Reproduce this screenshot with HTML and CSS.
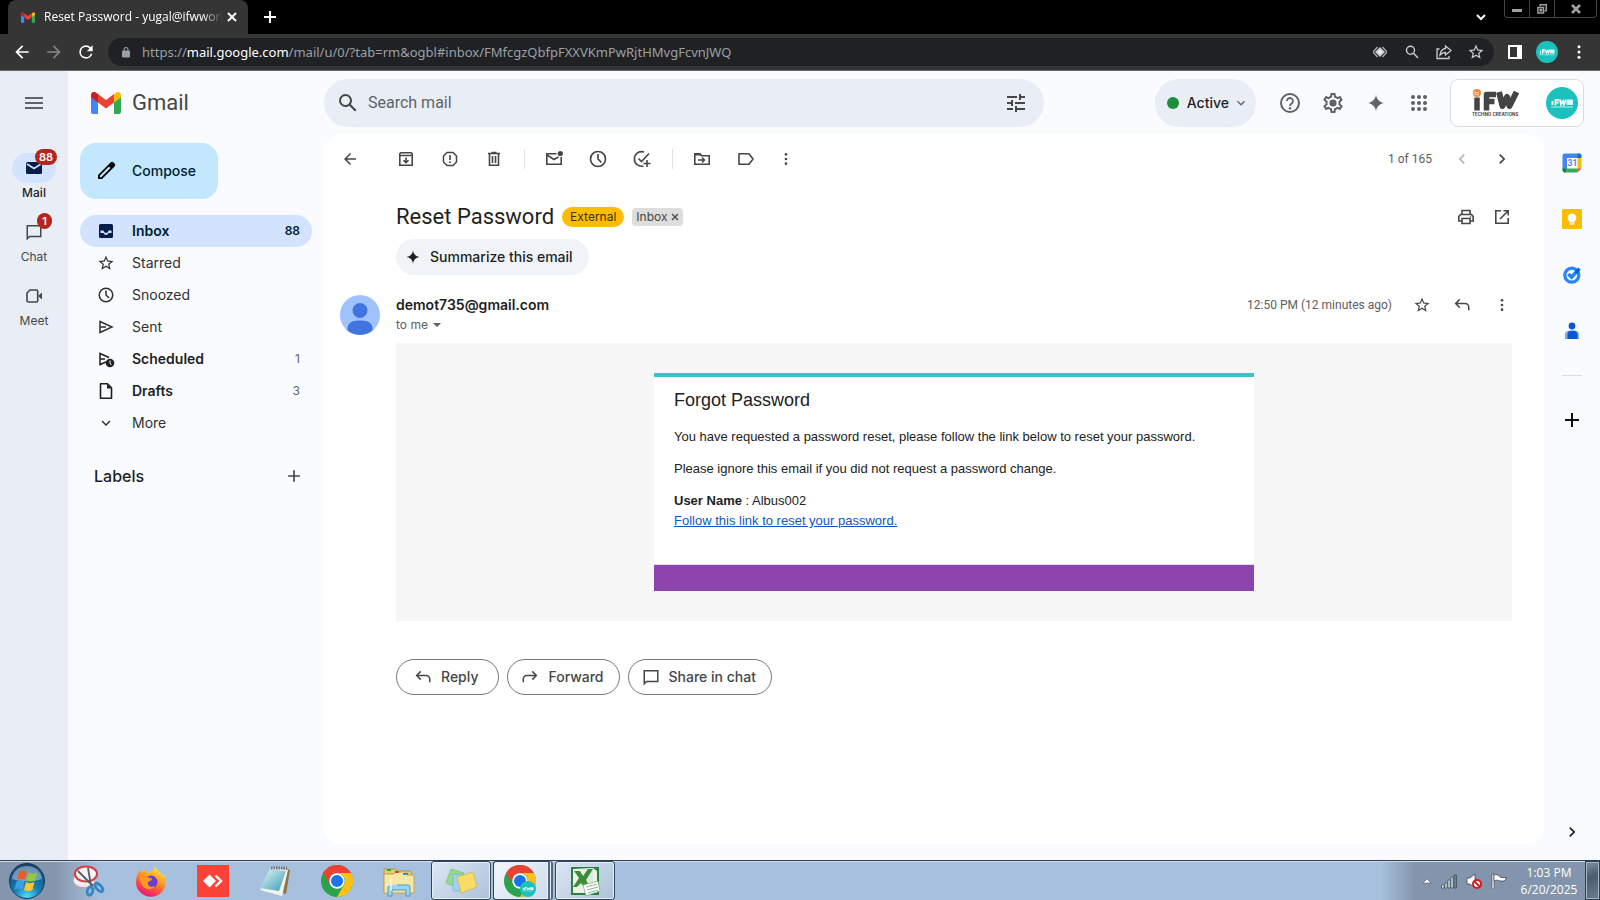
FILE: index.html
```html
<!DOCTYPE html>
<html lang="en">
<head>
<meta charset="utf-8">
<title>Reset Password - Gmail</title>
<link rel="stylesheet" href="styles.css">
</head>
<body>
<svg class="sprite" aria-hidden="true">
  <symbol id="gmail" viewBox="0 0 30 22"><path fill="#4285f4" d="M0 5v15a2 2 0 0 0 2 2h5V10z"/><path fill="#34a853" d="M23 22h5a2 2 0 0 0 2-2V5l-7 5z"/><path fill="#fbbc04" d="M23 2.600V10.500L30 5.200V3c0-2.600-3-4-5-2.300z"/><path fill="#ea4335" d="M7 10.500V2l8 6 8-6v8.500l-8 6z"/><path fill="#c5221f" d="M0 3v2.200l7 5.300V2L5.200.7C3-1 0 .4 0 3z"/></symbol>
  <symbol id="back" viewBox="0 0 24 24"><path d="M20 11H7.830l5.590-5.590L12 4l-8 8 8 8 1.410-1.410L7.830 13H20v-2z"/></symbol>
  <symbol id="fwd" viewBox="0 0 24 24"><path d="M4 11h12.170l-5.590-5.590L12 4l8 8-8 8-1.410-1.410L16.170 13H4v-2z"/></symbol>
  <symbol id="reload" viewBox="0 0 24 24"><path d="M17.650 6.350A7.960 7.960 0 0 0 12 4a8 8 0 1 0 7.730 10h-2.080A6 6 0 1 1 12 6c1.660 0 3.140.69 4.220 1.780L13 11h7V4l-2.350 2.350z"/></symbol>
  <symbol id="lock" viewBox="0 0 24 24"><path d="M18 8h-1V6A5 5 0 0 0 7 6v2H6a2 2 0 0 0-2 2v10a2 2 0 0 0 2 2h12a2 2 0 0 0 2-2V10a2 2 0 0 0-2-2zM9 6a3 3 0 0 1 6 0v2H9V6z"/></symbol>
  <symbol id="star" viewBox="0 0 24 24"><path d="M22 9.240l-7.190-.62L12 2 9.190 8.630 2 9.240l5.460 4.730L5.820 21 12 17.270 18.180 21l-1.630-7.030L22 9.240zM12 15.400l-3.760 2.270 1-4.280-3.320-2.880 4.380-.38L12 6.100l1.710 4.040 4.380.38-3.320 2.880 1 4.280L12 15.400z"/></symbol>
  <symbol id="search" viewBox="0 0 24 24"><path d="M20.490 19l-5.730-5.730C15.530 12.200 16 10.910 16 9.500A6.500 6.500 0 1 0 9.500 16c1.410 0 2.700-.47 3.770-1.240L19 20.490 20.490 19zM5 9.500a4.500 4.500 0 1 1 9 0 4.500 4.500 0 0 1-9 0z"/></symbol>
  <symbol id="down" viewBox="0 0 24 24"><path d="M7.400 8.600L12 13.200l4.600-4.600L18 10l-6 6-6-6z"/></symbol>
  <symbol id="left" viewBox="0 0 24 24"><path d="M15.400 7.400L14 6l-6 6 6 6 1.400-1.400L10.800 12z"/></symbol>
  <symbol id="right" viewBox="0 0 24 24"><path d="M8.600 7.400L10 6l6 6-6 6-1.400-1.400L13.200 12z"/></symbol>
  <symbol id="dots" viewBox="0 0 24 24"><circle cx="12" cy="5" r="2"/><circle cx="12" cy="12" r="2"/><circle cx="12" cy="19" r="2"/></symbol>
  <symbol id="clock" viewBox="0 0 24 24"><path fill="none" stroke="currentColor" stroke-width="2" d="M21 12a9 9 0 1 1-18 0 9 9 0 0 1 18 0zM12 6v6l4 4"/></symbol>
  <symbol id="spark" viewBox="0 0 24 24"><path d="M12 1c.9 6.200 4.800 10.100 11 11-6.200.9-10.100 4.800-11 11-.9-6.200-4.800-10.100-11-11 6.200-.9 10.100-4.800 11-11z"/></symbol>
  <symbol id="reply" viewBox="0 0 24 24"><path fill="none" stroke="currentColor" stroke-width="2" d="M9 4.500L3.500 10 9 15.500M4 10h12a5 5 0 0 1 5 5v4"/></symbol>
  <symbol id="chat" viewBox="0 0 24 24"><path fill="none" stroke="currentColor" stroke-width="2" d="M3 21V3.500h18V18H6z"/></symbol>
  <symbol id="plus" viewBox="0 0 24 24"><path d="M11 5h2v6h6v2h-6v6h-2v-6H5v-2h6z"/></symbol>
  <symbol id="chrome" viewBox="0 0 32 32"><circle cx="16" cy="16" r="16" fill="#2ba24c"/><path fill="#ea4335" d="M2.140 8a16 16 0 0 1 27.720 0H16a8 8 0 0 0-6.930 12z"/><path fill="#fbc116" d="M29.860 8A16 16 0 0 1 16 32l6.930-12A8 8 0 0 0 16 8z"/><circle cx="16" cy="16" r="7.700" fill="#fff"/><circle cx="16" cy="16" r="6" fill="#1a73e8"/></symbol>
  <symbol id="ifw" viewBox="0 0 32 32"><circle cx="16" cy="16" r="16" fill="#1bc2bd"/><g fill="none" stroke="#fff" stroke-width="1.800"><path d="M6.500 14v4M9.500 18.500v-5.600h3.500M9.500 15.700h3M14 12.500l1 5 2-3.500 1 3.500 2-5"/></g><rect x="20.500" y="12.500" width="6.500" height="5.500" rx="1" fill="#d8fffb"/><path stroke="#b5f3ee" d="M5 20h22"/></symbol>
</svg>

<header class="browser">
  <div class="tabstrip">
    <div class="tab">
      <svg class="favicon"><use href="#gmail"/></svg>
      <span class="tab-title">Reset Password - yugal@ifwworl</span>
      <button class="plain" aria-label="Close tab"><svg class="i10" viewBox="0 0 10 10"><path d="M1 1l8 8M9 1l-8 8" stroke="#fff" stroke-width="2"/></svg></button>
    </div>
    <button class="plain newtab" aria-label="New tab"><svg class="i12" viewBox="0 0 12 12"><path d="M6 0v12M0 6h12" stroke="#fff" stroke-width="2"/></svg></button>
    <button class="plain tabsearch" aria-label="Search tabs"><svg class="i10" viewBox="0 0 10 10"><path d="M1 3l4 4 4-4" fill="none" stroke="#fff" stroke-width="2"/></svg></button>
    <div class="winctl">
      <button class="plain" aria-label="Minimize"><svg viewBox="0 0 10 10"><path fill="#a0a0a0" d="M0 5h10v3H0z"/></svg></button>
      <button class="plain" aria-label="Restore"><svg viewBox="0 0 11 11"><path d="M3.500 2.500V.8h6.700v6.700H8.500M1 3.800h6.200V10H1zM3.500 6h1.500v1.500H3.500z" fill="none" stroke="#a0a0a0" stroke-width="1.600"/></svg></button>
      <button class="plain wide" aria-label="Close"><svg viewBox="0 0 10 10"><path d="M1 1l8 8M9 1L1 9" stroke="#a0a0a0" stroke-width="2.600"/></svg></button>
    </div>
  </div>
  <div class="toolbar">
    <button class="plain" aria-label="Back"><svg class="i20 white"><use href="#back"/></svg></button>
    <button class="plain" aria-label="Forward"><svg class="i20 dim"><use href="#fwd"/></svg></button>
    <button class="plain" aria-label="Reload"><svg class="i20 white"><use href="#reload"/></svg></button>
    <div class="omnibox">
      <svg class="i12 lock"><use href="#lock"/></svg>
      <span class="url" role="textbox" aria-label="Address">https://<b>mail.google.com</b>/mail/u/0/?tab=rm&amp;ogbl#inbox/FMfcgzQbfpFXXVKmPwRjtHMvgFcvnJWQ</span>
      <button class="plain" aria-label="Protection"><svg class="i14" viewBox="0 0 14 14"><path d="M4.500 2L0 7l4.500 5M9.500 2L14 7l-4.500 5" fill="none" stroke="#aaa" stroke-width="1.400"/><path d="M7 2l5 5-5 5-5-5z" fill="#c8c8c8"/><path d="M7 4.500L9.500 7 7 9.500 4.500 7z" fill="#eee"/></svg></button>
      <button class="plain" aria-label="Zoom"><svg class="i14" viewBox="0 0 14 14"><path d="M9.500 5.300a4 4 0 1 1-8 0 4 4 0 0 1 8 0zM8.500 8.300L13 13" fill="none" stroke="#ccc" stroke-width="1.400"/></svg></button>
      <button class="plain" aria-label="Share"><svg class="i16" viewBox="0 0 16 16"><path d="M3.500 5H1v9.500h12V12M9.500 2l5.500 4.500L9.500 11V8.500C7 8.500 5.500 9.300 4 11c.4-3.300 2-6 5.500-6.500z" fill="none" stroke="#ccc" stroke-width="1.300"/></svg></button>
      <button class="plain" aria-label="Bookmark"><svg class="i18 pale"><use href="#star"/></svg></button>
    </div>
    <button class="plain panel" aria-label="Side panel"><svg class="i14" viewBox="0 0 14 14"><path d="M1 1h12v12H1z" fill="none" stroke="#fff" stroke-width="2"/><path fill="#fff" d="M9 0h5v14H9z"/></svg></button>
    <button class="plain" aria-label="Profile"><svg class="i22"><use href="#ifw"/></svg></button>
    <button class="plain" aria-label="Browser menu"><svg class="i18 white"><use href="#dots"/></svg></button>
  </div>
</header>

<div class="app">
  <nav class="rail" aria-label="Apps">
    <button class="plain menu" aria-label="Main menu"><svg class="i18" viewBox="0 0 18 12"><path d="M0 1h18M0 6h18M0 11h18" stroke="#5f6368" stroke-width="2"/></svg></button>
    <a class="app-link on" href="#mail"><span class="pill"><svg class="i20" viewBox="0 0 20 20"><path fill="#041e49" d="M3.500 4h13A1.500 1.500 0 0 1 18 5.500v9a1.500 1.500 0 0 1-1.500 1.500h-13A1.500 1.500 0 0 1 2 14.500v-9A1.500 1.500 0 0 1 3.500 4z"/><path d="M3 6l7 4.500L17 6" fill="none" stroke="#d3e3fd" stroke-width="1.500"/></svg><i class="badge">88</i></span>Mail</a>
    <a class="app-link" href="#chat"><span class="pill"><svg class="i18"><use href="#chat"/></svg><i class="badge one">1</i></span>Chat</a>
    <a class="app-link" href="#meet"><span class="pill"><svg class="i18" viewBox="0 0 18 18"><path d="M5 3h6.500q1.200 0 1.200 1.200v9.600q0 1.200-1.200 1.200h-8Q2 15 2 13.800V6z" fill="none" stroke="currentColor" stroke-width="1.600" stroke-linejoin="round"/><path d="M13 9l4-3.500v7z"/></svg></span>Meet</a>
  </nav>

  <div class="work">
    <div class="topbar">
      <a class="brand" href="#inbox"><svg class="logo"><use href="#gmail"/></svg><span>Gmail</span></a>
      <form class="search" role="search">
        <button class="plain" type="button" aria-label="Search"><svg class="i24"><use href="#search"/></svg></button>
        <input type="text" placeholder="Search mail" aria-label="Search mail">
        <button class="plain" type="button" aria-label="Search options"><svg class="i24" viewBox="0 0 24 24"><path d="M3 17v2h6v-2H3zM3 5v2h10V5H3zm10 16v-2h8v-2h-8v-2h-2v6h2zM7 9v2H3v2h4v2h2V9H7zm14 4v-2H11v2h10zm-6-4h2V7h4V5h-4V3h-2v6z"/></svg></button>
      </form>
      <button class="status"><span class="dot"></span>Active<svg class="i16"><use href="#down"/></svg></button>
      <div class="tools">
        <button class="plain" aria-label="Support"><svg class="i24" viewBox="0 0 24 24"><circle cx="12" cy="12" r="9" fill="none" stroke="currentColor" stroke-width="2"/><path d="M9 10a3 3 0 1 1 4.500 2.600c-.9.600-1.500 1.200-1.500 2.400" fill="none" stroke="currentColor" stroke-width="1.800"/><circle cx="12" cy="17.300" r="1.200"/></svg></button>
        <button class="plain" aria-label="Settings"><svg class="i24" viewBox="0 0 24 24"><path d="M19.430 12.980c.04-.32.07-.64.07-.98 0-.34-.03-.66-.07-.98l2.110-1.650c.19-.15.24-.42.12-.64l-2-3.460c-.09-.16-.26-.25-.44-.25-.06 0-.12.010-.17.030l-2.490 1c-.52-.4-1.080-.73-1.690-.98l-.38-2.650C14.460 2.180 14.250 2 14 2h-4c-.25 0-.46.18-.49.42l-.38 2.650c-.61.25-1.170.59-1.690.98l-2.490-1c-.06-.02-.12-.03-.18-.03-.17 0-.34.09-.43.25l-2 3.460c-.13.22-.07.49.12.64l2.110 1.650c-.04.32-.07.65-.07.98 0 .33.03.66.07.98l-2.110 1.650c-.19.15-.24.42-.12.64l2 3.460c.09.16.26.25.44.25.06 0 .12-.01.17-.03l2.490-1c.52.4 1.080.73 1.690.98l.38 2.650c.03.24.24.42.49.42h4c.25 0 .46-.18.49-.42l.38-2.650c.61-.25 1.170-.59 1.690-.98l2.490 1c.06.02.12.03.18.03.17 0 .34-.09.43-.25l2-3.460c.12-.22.07-.49-.12-.64l-2.110-1.650zm-1.980-1.710c.04.31.05.52.05.73 0 .21-.02.43-.05.73l-.14 1.130.89.7 1.080.84-.7 1.210-1.270-.51-1.040-.42-.9.68c-.43.32-.84.56-1.250.73l-1.060.43-.16 1.130-.2 1.350h-1.400l-.19-1.350-.16-1.130-1.060-.43c-.43-.18-.83-.41-1.230-.71l-.91-.7-1.060.43-1.270.51-.7-1.210 1.080-.84.89-.7-.14-1.130c-.03-.31-.05-.54-.05-.74s.02-.43.05-.73l.14-1.130-.89-.7-1.080-.84.7-1.210 1.270.51 1.040.42.9-.68c.43-.32.84-.56 1.250-.73l1.060-.43.16-1.130.2-1.350h1.390l.19 1.350.16 1.130 1.060.43c.43.18.83.41 1.230.71l.91.7 1.060-.43 1.270-.51.7 1.210-1.070.85-.89.7.14 1.130z"/><circle cx="12" cy="12" r="3.600"/></svg></button>
        <button class="plain" aria-label="Gemini"><svg class="i18"><use href="#spark"/></svg></button>
        <button class="plain" aria-label="Google apps"><svg class="i16" viewBox="0 0 16 16"><circle cx="2" cy="2" r="2"/><circle cx="8" cy="2" r="2"/><circle cx="14" cy="2" r="2"/><circle cx="2" cy="8" r="2"/><circle cx="8" cy="8" r="2"/><circle cx="14" cy="8" r="2"/><circle cx="2" cy="14" r="2"/><circle cx="8" cy="14" r="2"/><circle cx="14" cy="14" r="2"/></svg></button>
      </div>
      <button class="account" aria-label="Account">
        <svg class="org" viewBox="0 0 48 28"><g fill="none" stroke="#444" stroke-linejoin="round"><path stroke-width="5.500" d="M5 8.500V21.500M14.500 21.500V5.500H24M15 12.500h7.500"/><path stroke-width="6" d="M27 3l3.500 14 4.500-9 2.500 9L44.500 3"/></g><circle cx="5" cy="4" r="4" fill="#f0883a"/><path d="M2 3l5 1M2 5l5 1" stroke="#fff" stroke-width=".7"/><text x="0" y="27" font-family="Inter, sans-serif" font-size="4.500" font-weight="700" fill="#444">TECHNO CREATIONS</text></svg>
        <svg class="i32"><use href="#ifw"/></svg>
      </button>
    </div>

    <div class="columns">
      <aside class="side">
        <button class="compose"><svg class="i24" viewBox="0 0 24 24"><path d="M4 20v-4L16.500 3.500a2 2 0 0 1 3 0l1 1a2 2 0 0 1 0 3L8 20z M5.800 16.800v1.400h1.400L16.500 9 15 7.500z" fill="#000" fill-rule="evenodd"/></svg>Compose</button>
        <nav class="folders" aria-label="Folders">
          <a class="on strong" href="#inbox"><svg class="i18" viewBox="0 0 18 18"><path d="M3.500 2h11A1.500 1.500 0 0 1 16 3.500v11a1.500 1.500 0 0 1-1.500 1.500h-11A1.500 1.500 0 0 1 2 14.500v-11A1.500 1.500 0 0 1 3.500 2zM3.500 4v7H6.500c.5 1.200 1.400 2 2.500 2s2-.8 2.500-2h3V4z" fill-rule="evenodd" fill="#041e49"/><path fill="#041e49" d="M3 3h12v5.500h-3.500a2.500 2.500 0 0 1-5 0H3z"/></svg><span>Inbox</span><em>88</em></a>
          <a href="#starred"><svg class="i18"><use href="#star"/></svg><span>Starred</span></a>
          <a href="#snoozed"><svg class="i18"><use href="#clock"/></svg><span>Snoozed</span></a>
          <a href="#sent"><svg class="i18" viewBox="0 0 18 18"><path d="M3 3.500L15 9 3 14.500zM3 9h6" fill="none" stroke="currentColor" stroke-width="1.500"/></svg><span>Sent</span></a>
          <a class="strong" href="#scheduled"><svg class="i18" viewBox="0 0 18 18"><path d="M9 12L3 14.500v-11l9 4M3 9h5" fill="none" stroke="currentColor" stroke-width="1.500"/><circle cx="13" cy="13" r="4.300"/><path d="M13 10.500v3l1.500 1" fill="none" stroke="#fff"/></svg><span>Scheduled</span><em>1</em></a>
          <a class="strong" href="#drafts"><svg class="i18" viewBox="0 0 18 18"><path d="M3.500 1.800h7l4 4v10.400h-11z" fill="none" stroke="currentColor" stroke-width="1.600" stroke-linejoin="round"/><path d="M10 2v4.500h4.500z"/></svg><span>Drafts</span><em>3</em></a>
          <a href="#more"><svg class="i18"><use href="#down"/></svg><span>More</span></a>
        </nav>
        <div class="labels"><h2>Labels</h2><button class="plain" aria-label="Create label"><svg class="i20"><use href="#plus"/></svg></button></div>
      </aside>

      <main class="pane">
        <div class="actions">
          <button class="plain first" aria-label="Back to inbox"><svg class="i18"><use href="#back"/></svg></button>
          <button class="plain" aria-label="Archive"><svg class="i18" viewBox="0 0 18 18"><path d="M2.800 5.500h12.400v9.700H2.800zM2.800 5.500V3.800l1-1h10.400l1 1v1.700M9 7.500v5M6.500 10.200L9 12.700l2.500-2.500" fill="none" stroke="currentColor" stroke-width="1.600"/></svg></button>
          <button class="plain" aria-label="Report spam"><svg class="i18" viewBox="0 0 18 18"><path d="M6 2.500h6L15.500 6v6L12 15.500H6L2.500 12V6z" fill="none" stroke="currentColor" stroke-width="1.500"/><path d="M8.200 5h1.600v5H8.200zM8.200 11.300h1.600v1.600H8.200z"/></svg></button>
          <button class="plain" aria-label="Delete"><svg class="i18" viewBox="0 0 18 18"><path d="M4.500 4v11.200h9V4M3 3.500h12M6.500 2.500h5M7.500 6v7M10.500 6v7" fill="none" stroke="currentColor" stroke-width="1.600"/></svg></button>
          <span class="sep"></span>
          <button class="plain" aria-label="Mark as unread"><svg class="i18" viewBox="0 0 18 18"><path d="M11.500 3.800H1.800v10.400h14.400V7M2 5l7 4.500L13.500 7" fill="none" stroke="currentColor" stroke-width="1.600"/><circle cx="15.300" cy="3.500" r="2.600"/></svg></button>
          <button class="plain" aria-label="Snooze"><svg class="i20"><use href="#clock"/></svg></button>
          <button class="plain" aria-label="Add to tasks"><svg class="i20" viewBox="0 0 20 20"><path d="M12 3a7.300 7.300 0 1 0-.5 14M6.500 9.500l3 3L17 4.500M15 11v7M11.500 14.500h7" fill="none" stroke="currentColor" stroke-width="1.600"/></svg></button>
          <span class="sep"></span>
          <button class="plain" aria-label="Move to"><svg class="i18" viewBox="0 0 18 18"><path d="M1.800 14.200V3.800H7l1.500 2h7.700v8.400z" fill="none" stroke="currentColor" stroke-width="1.600"/><path d="M5 10h6M9 7.500l2.500 2.500L9 12.500" fill="none" stroke="currentColor" stroke-width="1.500"/><path d="M1 3h6l2 2.500H1z"/></svg></button>
          <button class="plain" aria-label="Labels"><svg class="i18" viewBox="0 0 18 18"><path d="M2 3.800h10L16 9l-4 5.200H2z" fill="none" stroke="currentColor" stroke-width="1.600" stroke-linejoin="round"/></svg></button>
          <button class="plain last" aria-label="More"><svg class="i16"><use href="#dots"/></svg></button>
          <span class="count">1 of 165</span>
          <button class="plain nav faded" aria-label="Newer"><svg class="i20"><use href="#left"/></svg></button>
          <button class="plain nav" aria-label="Older"><svg class="i20"><use href="#right"/></svg></button>
        </div>

        <div class="subject">
          <h1>Reset Password</h1>
          <span class="external">External</span>
          <span class="inbox-tag">Inbox <button class="plain" aria-label="Remove Inbox label"><svg viewBox="0 0 8 8"><path d="M1 1l6 6M7 1L1 7" stroke="#444746" stroke-width="1.400"/></svg></button></span>
          <button class="plain nav push" aria-label="Print"><svg class="i18" viewBox="0 0 18 18"><path d="M5 6V2.500h8V6M5 13H1.800V8.500L3.500 6.500h11l1.700 2V13H13M5 10.500h8v5H5z" fill="none" stroke="currentColor" stroke-width="1.600"/><circle cx="13.500" cy="9" r=".8"/></svg></button>
          <button class="plain nav" aria-label="Open in new window"><svg class="i18" viewBox="0 0 18 18"><path d="M8 2.800H2.800v12.400h12.400V10M10.500 2.800h4.700v4.700M15 3L7 11" fill="none" stroke="currentColor" stroke-width="1.600"/></svg></button>
        </div>
        <button class="summarize"><svg class="i14"><use href="#spark"/></svg>Summarize this email</button>

        <article class="message">
          <div class="sender">
            <svg class="avatar" viewBox="0 0 40 40"><circle cx="20" cy="20" r="20" fill="#a0c3ff"/><circle cx="20" cy="15.500" r="7.500" fill="#4274e0"/><path d="M7.500 35.500C7 28 11 25.500 20 25.500S33 28 32.500 35.500A20 20 0 0 1 7.500 35.500z" fill="#4274e0"/></svg>
            <div class="who"><h3>demot735@gmail.com</h3><button class="plain tome">to me <svg viewBox="0 0 8 4"><path d="M0 0h8L4 4z"/></svg></button></div>
            <time>12:50 PM (12 minutes ago)</time>
            <button class="plain nav" aria-label="Star"><svg class="i18"><use href="#star"/></svg></button>
            <button class="plain nav" aria-label="Reply"><svg class="i18"><use href="#reply"/></svg></button>
            <button class="plain nav" aria-label="More options"><svg class="i16"><use href="#dots"/></svg></button>
          </div>
          <div class="mail-body">
            <section class="card">
              <h2>Forgot Password</h2>
              <p>You have requested a password reset, please follow the link below to reset your password.</p>
              <p>Please ignore this email if you did not request a password change.</p>
              <p><strong>User Name</strong> : Albus002<br><a href="#reset">Follow this link to reset your password.</a></p>
              <div class="card-foot"></div>
            </section>
          </div>
          <div class="replies">
            <button><svg class="i18"><use href="#reply"/></svg>Reply</button>
            <button><svg class="i18" viewBox="0 0 24 24"><path fill="none" stroke="currentColor" stroke-width="2" d="M15 4.500l5.500 5.500-5.500 5.500M20 10H8a5 5 0 0 0-5 5v4"/></svg>Forward</button>
            <button><svg class="i18"><use href="#chat"/></svg>Share in chat</button>
          </div>
        </article>
      </main>

      <aside class="addons">
        <button class="plain" aria-label="Calendar"><svg class="i20" viewBox="0 0 20 20"><path fill="#fff" d="M4 4h12v12H4z"/><path fill="#4285f4" d="M2 .5h14V5H5v11H.5V2z"/><path fill="#1967d2" d="M15.500.5H18L19.500 2v3h-4z"/><path fill="#fbbc04" d="M15.500 5h4v10.500h-4z"/><path fill="#34a853" d="M4.500 15.500h11v4h-11z"/><path fill="#188038" d="M.5 15.500h4v4H2L.5 18z"/><path fill="#ea4335" d="M15.500 15.500h4l-4 4z"/><text x="5.500" y="13.300" font-family="Roboto, sans-serif" font-size="8.500" font-weight="700" fill="#4285f4">31</text></svg></button>
        <button class="plain" aria-label="Keep"><svg class="i20" viewBox="0 0 20 20"><rect width="20" height="20" rx="1.500" fill="#fbbc04"/><path fill="#fff" d="M10 4.500a4.300 4.300 0 0 1 2.500 7.800V13.500h-5v-1.200A4.300 4.300 0 0 1 10 4.500zM7.500 14.300h5v1.300h-5z"/></svg></button>
        <button class="plain" aria-label="Tasks"><svg class="i20" viewBox="0 0 20 20"><circle cx="9.800" cy="10.200" r="7" fill="none" stroke="#2684fc" stroke-width="3.200"/><path d="M6.500 9.200l3 3 8-8.500" fill="none" stroke="#0066da" stroke-width="3.200"/><path d="M6.500 9.200l3 3 4-4.200" fill="none" stroke="#2684fc" stroke-width="3.200"/></svg></button>
        <button class="plain" aria-label="Contacts"><svg class="i20" viewBox="0 0 20 20"><circle cx="10" cy="5" r="3.400" fill="#0b57d0"/><path fill="#7baaf7" d="M3 18v-4.500A4 4 0 0 1 7 9.800h6a4 4 0 0 1 4 3.700V18z"/><path fill="#0b57d0" d="M5.500 18v-4.500A3.800 3.800 0 0 1 9 9.800h3a3.500 3.500 0 0 1 3.500 3.700V18z"/></svg></button>
        <hr>
        <button class="plain" aria-label="Get add-ons"><svg class="i14" viewBox="0 0 14 14"><path d="M7 0v14M0 7h14" stroke="#111" stroke-width="2"/></svg></button>
        <button class="plain hide" aria-label="Hide side panel"><svg class="i20"><use href="#right"/></svg></button>
      </aside>
    </div>
  </div>
</div>

<footer class="taskbar">
  <button class="plain" aria-label="Start"><svg class="i36" viewBox="0 0 36 36"><defs><radialGradient id="orb" cx=".5" cy=".95" r=".9"><stop offset="0" stop-color="#4fe0ff"/><stop offset=".4" stop-color="#1583b8"/><stop offset="1" stop-color="#16446c"/></radialGradient></defs><circle cx="18" cy="18" r="17.500" fill="url(#orb)" stroke="#163a5c"/><path d="M3 16C4 7 11 3 18 3s14 4 15 13c-9 3-20 3-30 0z" fill="#dbe9f5" opacity=".45"/><path fill="#ee5b25" d="M10 9c3-2 5-1.500 8 0l-2 8c-3-1.500-5-1.500-8 0z"/><path fill="#9ac83c" d="M19.500 9.500c3 1.500 6 1.300 8.500 0l-2 8c-3 1.500-5.500 1.500-8.500 0z"/><path fill="#3f9fe0" d="M7.500 18.500c3-1.500 5-1.500 8 0l-2 8c-3-1.500-5-1.500-8 0z"/><path fill="#fcc52d" d="M17 19c3 1.500 5.500 1.500 8.500 0l-2 8c-3 1.500-5.500 1.500-8.500 0z"/></svg></button>
  <button class="plain" aria-label="Snipping Tool"><svg class="i32" viewBox="0 0 32 32"><ellipse cx="11" cy="15" rx="11" ry="7.500" fill="#eee" stroke="#d99"/><ellipse cx="13" cy="9" rx="11" ry="7.500" fill="#f7f4f4" stroke="#d33c40" stroke-width="2"/><path d="M5 6l15 15M15 3l3 18" stroke="#555d66" stroke-width="1.800"/><ellipse cx="17" cy="26" rx="2.800" ry="4.200" fill="none" stroke="#3487c4" stroke-width="2.800" transform="rotate(12 17 26)"/><ellipse cx="26" cy="22.500" rx="2.500" ry="5" fill="none" stroke="#3487c4" stroke-width="2.800" transform="rotate(-42 26 22.500)"/></svg></button>
  <button class="plain" aria-label="Firefox"><svg class="i32" viewBox="0 0 32 32"><defs><linearGradient id="fox" x1=".8" y1="0" x2=".3" y2="1"><stop offset="0" stop-color="#fff04a"/><stop offset=".45" stop-color="#ff9420"/><stop offset=".8" stop-color="#fa3553"/><stop offset="1" stop-color="#e0187e"/></linearGradient></defs><path fill="url(#fox)" d="M20 1c1 4 5 5 7 9 1 1 2 0 2-1 3 6 2 13-2 18a15 15 0 0 1-22 0C0 22 0 14 3 9l1-4c1 1 2 2 3 3l3-4c0 2 1 3 3 4 4-1 6-3 7-7z"/><circle cx="16" cy="17" r="6.500" fill="#6a3fd0"/><path fill="#ff9a1e" d="M4 12c4-3 8-2 10 1 2 0 3 0 3 1-1 2-3 2-4 3-1 4 3 6 7 4-3 5-10 4-13-1-1-2-2-5-3-8z"/></svg></button>
  <button class="plain" aria-label="AnyDesk"><svg class="i32" viewBox="0 0 32 32"><path fill="#fb4236" d="M0 0h32v32H0z"/><path fill="#fff" d="M12.500 9.500l6.500 6.500-6.500 6.500L6 16z"/><path d="M18.500 10.500l5.500 5.500-5.500 5.500" fill="none" stroke="#fff" stroke-width="2.400"/></svg></button>
  <button class="plain" aria-label="Notepad"><svg class="i32" viewBox="0 0 32 32"><defs><linearGradient id="note" x1="0" y1="0" x2="1" y2="1"><stop offset="0" stop-color="#e8f8fb"/><stop offset="1" stop-color="#3a9db4"/></linearGradient></defs><path fill="#8d7440" d="M27 4l4 1-4 24-3-1z"/><path fill="#f2f2ee" d="M12 3l17 2-6 26-22-6z"/><path fill="url(#note)" d="M11 4l16 2-7 20-19-3z"/><path d="M12 3h16" stroke="#777" stroke-width="3" stroke-dasharray="1.500 1"/></svg></button>
  <button class="plain" aria-label="Chrome"><svg class="i32"><use href="#chrome"/></svg></button>
  <button class="plain" aria-label="Explorer"><svg class="i32" viewBox="0 0 32 32"><path fill="#e9c96a" stroke="#b89740" d="M1 8V4h11l2 2h13l2 3v18H1z"/><path fill="#f8e6a4" stroke="#c7a54e" d="M1 9h10l2-2h10l1 3h7v18H1z"/><path fill="#1faf45" d="M4 4h4v2H4z"/><path fill="#d8483b" d="M12 6h4v2h-4z"/><path fill="#2b8fd8" d="M20 8h5v2h-5z"/><path d="M5 31V22q0-2 2-2h18q2 0 2 2v9h-4v-6H9v6z" fill="#9bd4ee" stroke="#4d9cc3"/><path d="M8 14v12M3 20h11" stroke="#fff"/></svg></button>
  <button class="task" aria-label="Sticky Notes"><svg class="i32" viewBox="0 0 32 32"><path fill="#94d98c" stroke="#6db56a" stroke-width=".6" d="M6 4l13 4-6 15-12-5z"/><path fill="#9fd2f3" stroke="#74add4" stroke-width=".6" d="M8 9l14 1-2 16H8z"/><path fill="#f7dd66" stroke="#caa93a" stroke-width=".6" d="M12 12l16-5 4 15-16 6z"/></svg></button>
  <button class="task stacked" aria-label="Google Chrome"><svg class="i32" viewBox="0 0 32 32"><use href="#chrome"/><svg x="16" y="16" width="16" height="16"><use href="#ifw"/></svg></svg></button>
  <button class="task" aria-label="Excel"><svg class="i32" viewBox="0 0 32 32"><path fill="#2c7f43" d="M2 2h28v28H2z"/><path fill="#eaf4e6" d="M4 4l20-1 4 3v22H4z"/><path fill="#dcebd8" d="M24 3v14H14z"/><path fill="#3c8c3a" d="M5 6h6l3 5 5-7h5l-7 11 4 7h-6l-3-4-4 4H4l6-9z"/><path fill="#fff" stroke="#6aa56f" stroke-width=".7" d="M14 20l15-4 2 10-14 5z"/><path d="M17 22l11-3M18 25l11-3M19 28l10-3" stroke="#8ab78d"/></svg></button>
  <div class="tray">
    <svg class="i10" viewBox="0 0 10 10"><path d="M1 7l4-4 4 4z" fill="#fff" stroke="#444" stroke-width=".5"/></svg>
    <svg class="i16" viewBox="0 0 16 16"><g fill="#fff" stroke="#3e4e60" stroke-width=".8"><path d="M.5 12h2.500v3H.5zM4 10h2v5H4zM7 7h2v8H7zM10 4h2v11h-2z"/><path fill="#718495" d="M13 2h2.500v13H13z"/></g></svg>
    <svg class="i16" viewBox="0 0 16 16"><path d="M1 5h3l5-4v14l-5-4H1z" fill="#fff" stroke="#445" stroke-width=".8"/><circle cx="11" cy="11" r="4" fill="#fff" stroke="#e0161c" stroke-width="2"/><path d="M8 8l6 6" stroke="#e0161c" stroke-width="1.800"/></svg>
    <svg class="i16" viewBox="0 0 16 16"><path d="M1 1h2v15H1z" fill="#fff" stroke="#334" stroke-width=".6"/><path d="M3 2c3-1.500 4 1 6 1l.5 1.500h6c-.5 2-2 4-4.500 3.500-3 .5-4-2-8 0z" fill="#fff" stroke="#334" stroke-width=".7"/></svg>
    <time>1:03 PM<br>6/20/2025</time>
  </div>
  <button class="desktop" aria-label="Show desktop"></button>
</footer>
</body>
</html>
```
FILE: styles.css
```css
* { box-sizing: border-box; }
body {
  margin: 0;
  min-height: 100vh;
  display: flex;
  flex-direction: column;
  background: #f9fbff;
  color: #1f1f1f;
  font: 14px/20px Inter, Roboto, sans-serif;
}
button, input { font: inherit; color: inherit; }
a { color: inherit; text-decoration: none; }
h1, h2, h3, p { margin: 0; font-weight: 400; }
i, em { font-style: normal; }
svg { display: block; flex: none; fill: currentColor; }
.sprite { position: absolute; width: 0; height: 0; }
.plain { display: flex; align-items: center; justify-content: center; padding: 0; border: 0; background: none; }
.i10 { width: 10px; height: 10px; }
.i12 { width: 12px; height: 12px; }
.i14 { width: 14px; height: 14px; }
.i16 { width: 16px; height: 16px; }
.i18 { width: 18px; height: 18px; }
.i20 { width: 20px; height: 20px; }
.i22 { width: 22px; height: 22px; }
.i24 { width: 24px; height: 24px; }
.i32 { width: 32px; height: 32px; }
.i36 { width: 36px; height: 36px; }
.white { color: #fff; }
.dim { color: #868686; }
.pale { color: #ccc; }

/* Browser frame */
.browser { border-bottom: 1px solid #6b6668; font-family: "Open Sans", "Noto Sans", sans-serif; }
.tabstrip { display: flex; height: 34px; padding-left: 8px; background: #000; }
.tab { display: flex; align-items: center; width: 240px; padding: 0 11px 0 13px; border-radius: 8px 8px 0 0; background: #353535; color: #fff; font-size: 12px; }
.favicon { width: 14px; height: 11px; }
.tab-title { flex: 1; margin: 0 4px 0 9px; white-space: nowrap; -webkit-mask-image: linear-gradient(90deg, #000 88%, transparent); mask-image: linear-gradient(90deg, #000 88%, transparent); }
.newtab { width: 44px; }
.tabsearch { width: 30px; margin-left: auto; }
.winctl { display: flex; height: 18px; margin: 0 3px 0 8px; border: 1px solid #444; border-top: 0; border-radius: 0 0 4px 4px; }
.winctl button { width: 25px; border-right: 1px solid #444; }
.winctl .wide { width: 41px; border: 0; }
.winctl svg { width: 10px; height: 10px; }
.toolbar { display: flex; align-items: center; gap: 12px; height: 36px; padding: 0 12px; background: #353535; }
.omnibox { flex: 1; display: flex; align-items: center; height: 28px; padding: 0 2px 0 12px; border-radius: 14px; background: #202124; color: #9aa0a6; font: 13px/20px "Noto Sans", sans-serif; }
.omnibox button { width: 32px; }
.panel { margin: 0 2px; }
.lock { height: 13px; }
.url { flex: 1; margin-left: 10px; white-space: nowrap; }
.url b { color: #fff; font-weight: 400; }

/* App shell */
.app { flex: 1; display: flex; }
.rail { width: 68px; display: flex; flex-direction: column; align-items: center; background: #e9eef6; color: #444746; }
.menu { height: 64px; margin-bottom: 18px; }
.menu svg { height: 12px; }
.app-link { display: flex; flex-direction: column; align-items: center; height: 64px; font-size: 12px; line-height: 18px; }
.pill { position: relative; display: grid; place-items: center; width: 44px; height: 30px; margin-bottom: 1px; border-radius: 15px; }
.on .pill { background: #d3e3fd; }
.app-link.on { color: #1f1f1f; font-weight: 500; }
.badge { position: absolute; top: -4px; right: -1px; padding: 0 4px; border-radius: 8px; background: #b3261e; color: #fff; font-size: 11px; font-weight: 600; line-height: 16px; }
.badge.one { right: 4px; padding: 0 5px; }
.work { flex: 1; display: flex; flex-direction: column; }
.topbar { display: flex; align-items: center; height: 64px; padding-right: 16px; color: #5f6368; }
.brand { display: flex; align-items: center; gap: 11px; width: 256px; padding-left: 23px; color: #444746; font: 22px/28px Roboto, sans-serif; }
.logo { width: 30px; height: 22px; }
.search { display: flex; align-items: center; gap: 8px; width: 720px; height: 48px; padding: 0 16px 0 12px; border-radius: 24px; background: #e9eef6; color: #444746; font: 16px/24px Roboto, sans-serif; }
.search input { flex: 1; border: 0; padding: 0; background: none; outline: 0; }
.search input::placeholder { color: #5f6368; opacity: 1; }
.status { display: flex; align-items: center; height: 48px; margin-left: auto; padding: 0 7px 0 12px; border: 0; border-radius: 24px; background: #e9eef6; color: #1f1f1f; font-weight: 500; }
.dot { width: 12px; height: 12px; margin-right: 8px; border-radius: 50%; background: #1e8e3e; }
.status svg { margin-left: 4px; color: #5f6368; }
.tools { display: flex; margin: 0 10px 0 12px; }
.tools button { width: 43px; height: 40px; }
.account { display: flex; align-items: center; gap: 26px; height: 48px; padding: 0 5px 0 21px; border: 1px solid #dadce0; border-radius: 8px; background: #fff; }
.org { width: 48px; height: 28px; }
.columns { flex: 1; display: flex; }
.side { width: 256px; padding: 8px 12px 0; }
.compose { display: flex; align-items: center; gap: 14px; height: 56px; padding: 0 22px 0 14px; border: 0; border-radius: 16px; background: #c2e7ff; color: #001d35; font-weight: 500; }
.folders { margin-top: 16px; }
.folders a { display: flex; align-items: center; gap: 17px; height: 32px; padding: 0 12px 0 17px; border-radius: 16px; color: #303134; }
.folders a.on { background: #d3e3fd; color: #001d35; }
.folders .strong { color: #1f1f1f; font-weight: 600; }
.folders span { flex: 1; }
.folders em { font-size: 12px; font-weight: 400; color: #5f6368; }
.folders .on em { color: #001d35; font-weight: 600; }
.labels { display: flex; align-items: center; justify-content: space-between; margin: 25px 8px 0 14px; height: 24px; color: #444746; }
.labels h2 { font-size: 16px; color: #1f1f1f; font-weight: 500; }

/* Conversation */
.pane { flex: 1; margin-bottom: 16px; padding-left: 4px; border-radius: 16px; background: #fff; color: #444746; }
.actions { display: flex; align-items: center; height: 48px; padding-right: 22px; }
.actions button { width: 44px; height: 40px; }
.actions .first { margin-right: 12px; }
.actions .last { width: 36px; }
.sep { width: 16px; height: 20px; background: linear-gradient(#e3e3e3, #e3e3e3) center / 1px 100% no-repeat; }
.count { margin: 0 10px 0 auto; color: #5e5e5e; font: 12px/20px Roboto, sans-serif; }
.nav, .actions .nav { width: 40px; height: 40px; }
.faded { color: #b5b5b5; }
.subject { display: flex; align-items: center; height: 44px; margin-top: 12px; padding: 0 22px 0 68px; }
.subject h1 { color: #1f1f1f; font: 22px/28px Roboto, sans-serif; }
.external { margin-left: 8px; padding: 0 8px; border-radius: 10px; background: #fbbc04; color: #3c3000; font-size: 12px; }
.inbox-tag { display: flex; align-items: center; gap: 4px; margin-left: 8px; padding: 0 4px; border-radius: 4px; background: #ddd; font-size: 12px; line-height: 18px; }
.inbox-tag svg { width: 8px; height: 8px; }
.subject .push { width: 32px; margin-left: auto; }
.summarize { display: flex; align-items: center; gap: 10px; height: 36px; margin-left: 68px; padding: 0 16px 0 10px; border: 0; border-radius: 18px; background: #f0f4f9; color: #1f1f1f; font-weight: 500; }
.message { margin-top: 20px; padding: 0 32px 0 68px; }
.sender { display: flex; align-items: flex-start; height: 40px; margin: 0 -10px 8px -56px; }
.avatar { width: 40px; height: 40px; margin-right: 16px; }
.who { flex: 1; }
.who h3 { color: #1f1f1f; font-size: 14px; font-weight: 600; }
.tome { gap: 5px; color: #5e5e5e; font-size: 12px; }
.tome svg { width: 8px; height: 4px; }
.sender time { margin-right: 10px; color: #5e5e5e; font: 12px/20px Roboto, sans-serif; }
.sender .nav { height: 20px; }
.mail-body { padding: 30px 16px; background: #f7f7f7; }
.card { max-width: 600px; margin: 0 auto; padding-top: 13px; border-top: 4px solid #2fc5d2; background: #fff; color: #222; font: 13px/20px "Liberation Sans", Arial, sans-serif; }
.card h2 { margin: 0 20px 17px; font-size: 18px; }
.card p { margin: 0 20px 12px; }
.card a { color: #15c; text-decoration: underline; }
.card-foot { height: 27px; margin-top: 33px; border-top: 1px solid #ddd; background: #8e44ad; }
.replies { display: flex; gap: 8px; margin-top: 38px; }
.replies button { display: flex; align-items: center; gap: 9px; height: 36px; padding: 0 20px 0 17px; border: 1px solid #747775; border-radius: 18px; background: #fff; font-weight: 500; }
.replies button:nth-child(n+2) { padding: 0 15px 0 13px; }
.addons { width: 56px; display: flex; flex-direction: column; align-items: center; color: #1f1f1f; }
.addons button { height: 56px; }
.addons hr { width: 20px; margin: 16px 0; border: 0; border-top: 1px solid #dadce0; }
.addons .hide { margin-top: auto; }

/* Taskbar */
.taskbar { display: flex; align-items: center; height: 40px; padding-left: 9px; border-top: 1px solid #2e3f55; box-shadow: inset 0 1px #cfdded; background: linear-gradient(90deg, #8496ad 0, #8496ad 55px, #a7c0dd 100px, #a7c0dd calc(100% - 220px), #8395ac calc(100% - 185px)); }
.taskbar > .plain { margin-right: 30px; }
.taskbar > .plain:first-child { margin-right: 28px; }
.taskbar > .plain:nth-of-type(7) { margin-right: 16px; }
.task { display: grid; place-items: center; width: 60px; height: 39px; margin-right: 2px; padding: 0; border: 1px solid #33465c; border-radius: 3px; background: linear-gradient(135deg, #dce7f3, #adc2da); box-shadow: inset 0 0 0 1px #e6eff8; }
.stacked { padding-right: 2px; border-right: 5px double #52677f; background: linear-gradient(135deg, #f4f8fc, #ccdaea); }
.tray { display: flex; align-items: center; gap: 9px; margin-left: auto; color: #fff; }
.tray time { width: 66px; margin-right: 3px; font: 12px/17px "Open Sans", "Noto Sans", sans-serif; text-align: center; }
.desktop { width: 15px; height: 39px; padding: 0; border: 1px solid #2e3f50; background: linear-gradient(160deg, #8494a6, #4a5b6c 40%, #6c7d90); box-shadow: inset 0 0 0 1px #a5b4c4; }
```
